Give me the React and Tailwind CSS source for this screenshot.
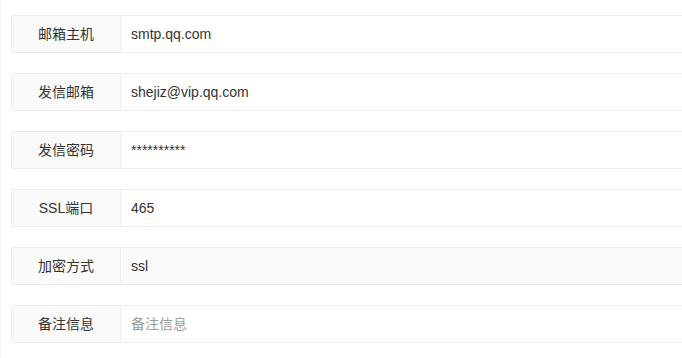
export default function App() {
  // 邮件配置表单
  const rows = [
    { label: "邮箱主机", value: "smtp.qq.com" },
    { label: "发信邮箱", value: "shejiz@vip.qq.com" },
    { label: "发信密码", value: "**********" },
    { label: "SSL端口", value: "465" },
    { label: "加密方式", value: "ssl", gray: true },
    { label: "备注信息", value: "", placeholder: "备注信息" },
  ];

  return (
    <div
      className="w-[682px] h-[358px] bg-white border-l border-[#f3f3f3] pl-[10px] pt-[15px] overflow-hidden"
      style={{ fontFamily: '"Liberation Sans", "Noto Sans CJK SC", sans-serif' }}
    >
      <div className="flex flex-col gap-5">
        {rows.map((r) => (
          <div key={r.label} className="flex h-[38px] w-[700px]">
            <div className="w-[110px] shrink-0 flex items-center justify-center bg-[#fafafa] border border-[#eeeeee] rounded-l-[2px] text-[14px] text-[#333]">
              {r.label}
            </div>
            <input
              readOnly
              value={r.value}
              placeholder={r.placeholder}
              className={`flex-1 h-full pl-[10px] border border-l-0 border-[#eeeeee] text-[14px] text-[#333] placeholder:text-[#999] outline-none ${
                r.gray ? "bg-[#fafafa]" : "bg-white"
              }`}
            />
          </div>
        ))}
      </div>
    </div>
  );
}
